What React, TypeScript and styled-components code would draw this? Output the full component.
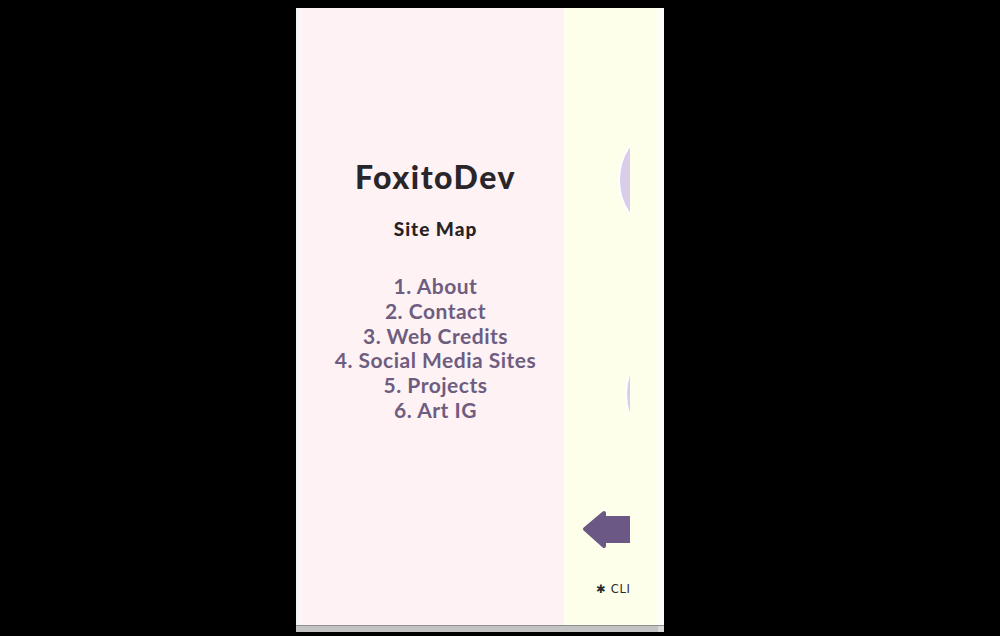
import { FC } from 'react';
import styled, { createGlobalStyle } from 'styled-components';

const GlobalStyle = createGlobalStyle`
  html, body {
    margin: 0;
    padding: 0;
    background: #000;
  }
  body {
    font-family: Lato, "Noto Sans", sans-serif;
  }
`;

const Page = styled.div`
  width: 1000px;
  height: 636px;
  padding: 8px 0 0 296px;
  box-sizing: border-box;
`;

const Frame = styled.div`
  width: 368px;
  height: 624px;
  display: flex;
  flex-direction: column;
  background: #fff;
`;

const Body = styled.div`
  flex: 1;
  display: flex;
  min-height: 0;
`;

const EdgeStrip = styled.div<{ $side: 'left' | 'right' }>`
  width: 6px;
  background: ${({ $side }) =>
    $side === 'left'
      ? 'linear-gradient(to right, #f1f1f1, #fafafa)'
      : '#fdfdfd'};
`;

const SiteMapPane = styled.nav`
  width: 262px;
  background: #fff2f4;
  display: flex;
  flex-direction: column;
  align-items: center;
  padding: 149px 0 0 5px;
  box-sizing: border-box;
`;

const Brand = styled.h1`
  margin: 0;
  font-size: 32px;
  font-weight: 900;
  color: #29262b;
  letter-spacing: 1.5px;
`;

const SectionTitle = styled.h2`
  margin: 21px 0 0;
  font-size: 19px;
  font-weight: 900;
  color: #262326;
  letter-spacing: 1px;
`;

const LinkList = styled.ol`
  list-style: none;
  margin: 34px 0 0;
  padding: 0;
  text-align: center;
`;

const LinkItem = styled.li`
  font-size: 21px;
  line-height: 24.8px;
  font-weight: 700;
  color: #6d5d80;
  letter-spacing: 0.5px;
`;

const GalleryPane = styled.div`
  width: 94px;
  background: #fdffea;
`;

const Clip = styled.div`
  width: 66px;
  height: 100%;
  overflow: hidden;
  display: flex;
  flex-direction: column;
  align-items: flex-start;
`;

const Bubble = styled.div<{ $top: number; $left: number }>`
  flex: none;
  width: 120px;
  height: 120px;
  margin-top: ${({ $top }) => $top}px;
  margin-left: ${({ $left }) => $left}px;
  border-radius: 50%;
  background: #dacdea;
  border: 2px solid #fff;
  box-sizing: border-box;
`;

const BackButton = styled.button`
  flex: none;
  margin: 56px 0 0 18px;
  padding: 0;
  border: 0;
  background: none;
  width: 60px;
  height: 40px;
  display: block;
`;

const Hint = styled.span`
  margin: 32px 0 0 32px;
  font-family: "DejaVu Sans", sans-serif;
  font-size: 11.5px;
  color: #2b2b2b;
  white-space: nowrap;
  letter-spacing: 0.7px;
`;

const Scrollbar = styled.div`
  flex: none;
  height: 6px;
  display: flex;
  border-top: 1px solid #8f8f8f;
  background: #c3c3c3;
`;

const ScrollTrack = styled.div`
  flex: 1;
`;

const ScrollCorner = styled.div`
  width: 6px;
  background: #d9d9d9;
`;

const links = [
  '1. About',
  '2. Contact',
  '3. Web Credits',
  '4. Social Media Sites',
  '5. Projects',
  '6. Art IG',
];

const ArrowLeft: FC = () => (
  <svg width="60" height="40" viewBox="0 0 60 40">
    <polygon
      points="3,19 22,3 22,8 58,8 58,31 22,31 22,36"
      fill="#6b5884"
      stroke="#6b5884"
      strokeWidth="4"
      strokeLinejoin="round"
    />
  </svg>
);

export default function App() {
  return (
    <Page>
      <GlobalStyle />
      <Frame>
        <Body>
          <EdgeStrip $side="left" />
          <SiteMapPane>
            <Brand>FoxitoDev</Brand>
            <SectionTitle>Site Map</SectionTitle>
            <LinkList>
              {links.map((link) => (
                <LinkItem key={link}>{link}</LinkItem>
              ))}
            </LinkList>
          </SiteMapPane>
          <GalleryPane>
            <Clip>
              <Bubble $top={112} $left={54} />
              <Bubble $top={94} $left={61} />
              <BackButton aria-label="Back">
                <ArrowLeft />
              </BackButton>
              <Hint>✱ CLI</Hint>
            </Clip>
          </GalleryPane>
          <EdgeStrip $side="right" />
        </Body>
        <Scrollbar>
          <ScrollTrack />
          <ScrollCorner />
        </Scrollbar>
      </Frame>
    </Page>
  );
}
